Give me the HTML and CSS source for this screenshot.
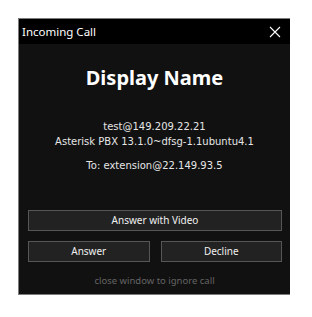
FILE: index.html
```html
<!DOCTYPE html>
<html>
<head>
<meta charset="utf-8">
<link rel="stylesheet" href="styles.css">
</head>
<body>
<div class="window">
  <div class="titlebar">
    <span class="title">Incoming Call</span>
    <svg class="close" width="12" height="12" viewBox="0 0 12 12"><path d="M1 1 L11 11 M11 1 L1 11" stroke="#fff" stroke-width="1.1"/></svg>
  </div>
  <div class="content">
    <div class="name">Display Name</div>
    <div class="info">
      <div class="line">test@149.209.22.21</div>
      <div class="line">Asterisk PBX 13.1.0~dfsg-1.1ubuntu4.1</div>
      <div class="line to">To: extension@22.149.93.5</div>
    </div>
    <div class="buttons">
      <button class="btn full">Answer with Video</button>
      <div class="row">
        <button class="btn">Answer</button>
        <button class="btn">Decline</button>
      </div>
    </div>
    <div class="hint">close window to ignore call</div>
  </div>
</div>
</body>
</html>
```
FILE: styles.css
```css
html, body { margin: 0; padding: 0; background: #fff; }
body { padding: 18px 0 0 18px; font-family: "Noto Sans", "Open Sans", sans-serif; }
.window {
  width: 271px;
  height: 275px;
  border: 1px solid #7c7c7c;
  border-right: none;
  background: #111;
  display: flex;
  flex-direction: column;
}
.titlebar {
  height: 25px;
  background: #000;
  display: flex;
  align-items: center;
  justify-content: space-between;
  padding: 0 9px 0 3px;
}
.title { color: #fff; font-size: 11.5px; line-height: 25px; }
.close { display: block; }
.content {
  flex: 1;
  display: flex;
  flex-direction: column;
  align-items: center;
  color: #fff;
}
.name {
  margin-top: 22px;
  font-size: 20px;
  font-weight: bold;
  line-height: 24px;
}
.info {
  margin-top: 29px;
  font-family: "DejaVu Sans", sans-serif;
  font-size: 10px;
  line-height: 15px;
  text-align: center;
  color: #e6e6e6;
}
.info .to { margin-top: 9px; }
.buttons {
  margin-top: 37px;
  width: 254px;
  margin-left: 1px;
  display: flex;
  flex-direction: column;
  gap: 10px;
}
.btn {
  height: 21px;
  background: #222;
  border: 1px solid #565656;
  color: #f0f0f0;
  font-family: "Noto Sans", sans-serif;
  font-size: 10px;
  padding: 0;
  margin: 0;
  line-height: 19px;
}
.row { display: flex; gap: 11px; }
.row .btn { flex: 1; }
.hint {
  margin-top: 12px;
  color: #646464;
  font-size: 9.5px;
  line-height: 14px;
}
```
